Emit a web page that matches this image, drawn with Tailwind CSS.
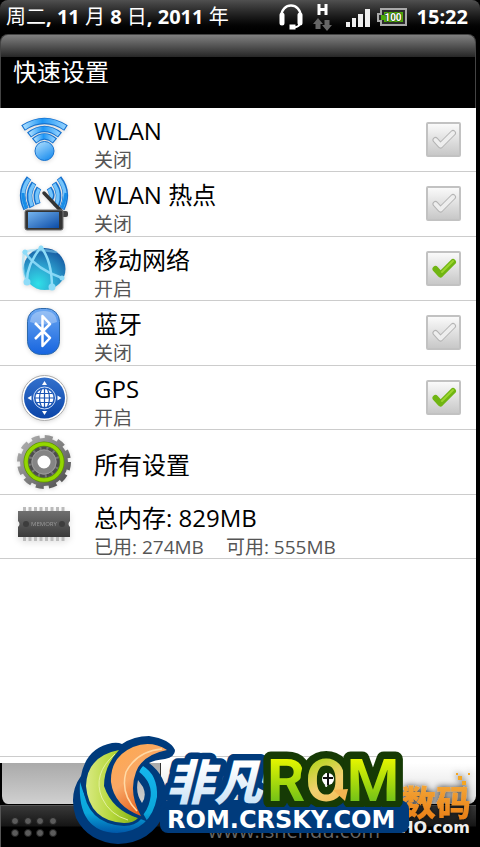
<!doctype html>
<html lang="zh-CN">
  <head>
    <meta charset="UTF-8">
    <meta name="viewport" content="width=device-width, initial-scale=1.0">
    <title>快速设置</title>
    <script src="https://cdn.jsdelivr.net/npm/@tailwindcss/browser@4"></script>
  </head>

  <body class="bg-black font-['Open_Sans','Noto_Sans_CJK_SC',sans-serif] text-black">
    <div class="relative flex min-h-screen flex-col overflow-hidden">
      <!-- Status bar -->
      <header class="flex h-[34px] items-center rounded-t-lg bg-linear-to-b from-[#505050] to-black pr-3 pl-[6px] text-white">
        <p class="text-xl leading-[34px] font-bold whitespace-nowrap"><span class="font-normal">周二</span>, 11 <span class="font-normal">月</span> 8 <span class="font-normal">日</span>, 2011 <span class="font-normal">年</span></p>
        <div class="ml-auto flex items-center">
          <svg class="mr-2 h-7 w-[26px]" viewBox="0 0 26 28" fill="none" stroke="#fff">
            <path d="M3.5 15V12a9.5 9.5 0 0 1 19 0v3" stroke-width="2.4" />
            <path d="M4 12v8M22 12v8" stroke-width="5" stroke-linecap="round" />
            <path d="M22 19q0 5-6 5.500" stroke-width="2" />
            <rect x="12" y="22" width="5" height="4" fill="#fff" />
          </svg>
          <svg class="mr-3 h-7 w-[22px]" viewBox="0 0 22 28">
            <path d="M7 1v11M14 1v11M7 6.500h7" stroke="#fff" stroke-width="3" />
            <path d="M6 15l5 6H8.500v5h-5v-5H1zM15 28l5-6h-2.500v-5h-5v5H10z" fill="#666" />
          </svg>
          <svg class="mr-[7px] h-5 w-6" viewBox="0 0 24 20" fill="#eee">
            <path d="M0 15h4v5H0zM6 11h4v9H6zM12 7h5v13h-5zM19 2h5v18h-5z" />
          </svg>
          <svg class="mr-[10px] h-5 w-[30px]" viewBox="0 0 30 20">
            <path d="M4 2h25v16H4v-4H1V7h3z" fill="#2c2c2c" stroke="#aaa" stroke-width="2" />
            <path d="M7 5h19v10H7v-2H4V8h3z" fill="#4caa0a" />
            <text x="16" y="14" text-anchor="middle" font-size="10" font-weight="700" fill="#fff" stroke="#1c3a08" stroke-width="1" paint-order="stroke" font-family="Roboto">100</text>
          </svg>
          <time class="text-xl leading-[34px] font-bold">15:22</time>
        </div>
      </header>

      <!-- Window -->
      <main class="mr-1 flex flex-1 flex-col">
        <div class="h-[74px] rounded-t-lg border border-b-0 border-[#444] bg-[linear-gradient(to_bottom,#808080_0,#262626_22px,#000_22px)] pt-[19px] pl-3">
          <h1 class="text-2xl leading-9 text-white">快速设置</h1>
        </div>

        <div class="flex flex-1 flex-col bg-white">
          <ul class="grid h-[451px] auto-rows-fr">
            <li class="border-b border-[#ccc]">
              <label class="flex h-full">
                <svg class="mt-1 ml-4 size-14 shrink-0 drop-shadow-sm" viewBox="0 0 56 56" fill="none">
                  <g stroke="#1672cf" stroke-width="6.500">
                    <path d="M7 16Q28.500 2 50 16" /><path d="M13 23Q28.500 11 44 23" /><path d="M18 29Q28.500 20 39 29" />
                  </g>
                  <g stroke="url(#wave)" stroke-width="4.500">
                    <path d="M8 15.500Q28.500 2 49 15.500" /><path d="M14 22.500Q28.500 11 43 22.500" /><path d="M19 28.500Q28.500 20 38 28.500" />
                  </g>
                  <circle cx="28.500" cy="39" r="9.500" fill="url(#ball)" stroke="#1672cf" />
                  <defs>
                    <linearGradient id="wave"><stop offset="0" stop-color="#a6dcff" /><stop offset=".45" stop-color="#1e96f5" /><stop offset="1" stop-color="#8fd0ff" /></linearGradient>
                    <linearGradient id="ball" x2=".6" y2="1"><stop stop-color="#b5e2ff" /><stop offset="1" stop-color="#2492ef" /></linearGradient>
                  </defs>
                </svg>
                <span class="ml-[22px] flex-1 pt-[7px]">
                  <span class="block text-2xl leading-8">WLAN</span>
                  <span class="block text-[19px] leading-[26px] text-[#555]">关闭</span>
                </span>
                <span class="relative mt-[14px] mr-[15px] size-[35px]">
                  <input type="checkbox" class="peer block size-[35px] appearance-none rounded-xs border-2 border-[#c2c2c2] bg-linear-to-b from-[#fafafa] to-[#c8c8c8]">
                  <svg class="pointer-events-none absolute inset-0 size-[35px] text-[#eee] peer-checked:text-[#70b512]" viewBox="0 0 35 35" fill="none" stroke-linecap="round" stroke-linejoin="round">
                    <path d="M9.500 18l5 5.500L27 11" stroke="#b4b4b4" stroke-width="6" /><path d="M9.500 18l5 5.500L27 11" stroke="currentColor" stroke-width="4" />
                  </svg>
                </span>
              </label>
            </li>

            <li class="border-b border-[#ccc]">
              <label class="flex h-full">
                <svg class="mt-1 ml-4 size-14 shrink-0 drop-shadow-sm" viewBox="0 0 56 56" fill="none">
                  <g stroke="#1672cf" stroke-width="5.500">
                    <path d="M13 2Q2 16 10 33" /><path d="M18 7Q10 18 16 31" /><path d="M23 12Q18 19 22 28" />
                    <path d="M43 2Q54 16 46 33" /><path d="M38 7Q46 18 40 31" /><path d="M33 12Q38 19 34 24" />
                  </g>
                  <g stroke="#74c4fb" stroke-width="3.500">
                    <path d="M13 3Q3 16 10 32" /><path d="M18 8Q11 18 16 30" /><path d="M23 13Q19 19 22 27" />
                    <path d="M43 3Q53 16 46 32" /><path d="M38 8Q45 18 40 30" /><path d="M33 13Q37 19 34 23" />
                  </g>
                  <path d="M7 17Q7 25 10 32M50 17Q49 25 46 32" stroke="#168de8" stroke-width="3" />
                  <path d="M28 17l19 20" stroke="#333" stroke-width="3.500" stroke-linecap="round" />
                  <rect x="43" y="35" width="9" height="6" rx="2" fill="#444" />
                  <rect x="9" y="34" width="38" height="20" rx="2" fill="#333" stroke="#777" />
                  <rect x="12" y="36" width="31" height="16" fill="url(#screen)" />
                  <defs><linearGradient id="screen" x2="1" y2="1"><stop stop-color="#75b4ee" /><stop offset="1" stop-color="#0b4ba6" /></linearGradient></defs>
                </svg>
                <span class="ml-[22px] flex-1 pt-[7px]">
                  <span class="block text-2xl leading-8">WLAN 热点</span>
                  <span class="block text-[19px] leading-[26px] text-[#555]">关闭</span>
                </span>
                <span class="relative mt-[14px] mr-[15px] size-[35px]">
                  <input type="checkbox" class="peer block size-[35px] appearance-none rounded-xs border-2 border-[#c2c2c2] bg-linear-to-b from-[#fafafa] to-[#c8c8c8]">
                  <svg class="pointer-events-none absolute inset-0 size-[35px] text-[#eee] peer-checked:text-[#70b512]" viewBox="0 0 35 35" fill="none" stroke-linecap="round" stroke-linejoin="round">
                    <path d="M9.500 18l5 5.500L27 11" stroke="#b4b4b4" stroke-width="6" /><path d="M9.500 18l5 5.500L27 11" stroke="currentColor" stroke-width="4" />
                  </svg>
                </span>
              </label>
            </li>

            <li class="border-b border-[#ccc]">
              <label class="flex h-full">
                <svg class="mt-1 ml-4 size-14 shrink-0 drop-shadow-sm" viewBox="0 0 56 56" fill="none">
                  <circle cx="28.500" cy="28" r="21" fill="url(#globe)" />
                  <g stroke="#8edcf8" stroke-width="2.500" stroke-linecap="round">
                    <path d="M25 6Q36 20 36 47" /><path d="M25 6Q10 25 11 42" /><path d="M8 11Q22 29 46 37" opacity=".9" /><path d="M8 11Q20 7 40 11" opacity=".5" /><path d="M8 11Q5 28 11 42" opacity=".5" />
                  </g>
                  <g fill="#8edcf8"><circle cx="9" cy="11" r="2.500" /><circle cx="25" cy="7" r="2.500" /><circle cx="11" cy="41" r="3.500" /><circle cx="36" cy="46" r="3.500" /><circle cx="46" cy="37" r="2.500" /></g>
                  <defs><radialGradient id="globe" cx=".35" cy=".85" r=".9"><stop stop-color="#2fe0e8" /><stop offset=".5" stop-color="#2c9fce" /><stop offset="1" stop-color="#15569f" /></radialGradient></defs>
                </svg>
                <span class="ml-[22px] flex-1 pt-[7px]">
                  <span class="block text-2xl leading-8">移动网络</span>
                  <span class="block text-[19px] leading-[26px] text-[#555]">开启</span>
                </span>
                <span class="relative mt-[14px] mr-[15px] size-[35px]">
                  <input type="checkbox" checked class="peer block size-[35px] appearance-none rounded-xs border-2 border-[#c2c2c2] bg-linear-to-b from-[#fafafa] to-[#c8c8c8]">
                  <svg class="pointer-events-none absolute inset-0 size-[35px] text-[#eee] peer-checked:text-[#70b512]" viewBox="0 0 35 35" fill="none" stroke-linecap="round" stroke-linejoin="round">
                    <path d="M9.500 18l5 5.500L27 11" stroke="currentColor" stroke-width="6" /><path d="M16 21L27 10" stroke="#9bd52f" stroke-width="2" />
                  </svg>
                </span>
              </label>
            </li>

            <li class="border-b border-[#ccc]">
              <label class="flex h-full">
                <svg class="mt-1 ml-4 size-14 shrink-0 drop-shadow-sm" viewBox="0 0 56 56" fill="none">
                  <rect x="11.500" y="3.500" width="32" height="46" rx="13" fill="url(#bt)" stroke="#2d69ab" />
                  <path d="M14 17Q15 6 28 6Q40 6 41 17Q28 22 14 17z" fill="#fff" opacity=".3" />
                  <path d="M19 18l15 15-7.500 8V11l7.500 8-15 15" stroke="#fff" stroke-width="2.500" stroke-linejoin="round" />
                  <defs><linearGradient id="bt" x2="0" y2="1"><stop stop-color="#6ca8f2" /><stop offset="1" stop-color="#1664df" /></linearGradient></defs>
                </svg>
                <span class="ml-[22px] flex-1 pt-[7px]">
                  <span class="block text-2xl leading-8">蓝牙</span>
                  <span class="block text-[19px] leading-[26px] text-[#555]">关闭</span>
                </span>
                <span class="relative mt-[14px] mr-[15px] size-[35px]">
                  <input type="checkbox" class="peer block size-[35px] appearance-none rounded-xs border-2 border-[#c2c2c2] bg-linear-to-b from-[#fafafa] to-[#c8c8c8]">
                  <svg class="pointer-events-none absolute inset-0 size-[35px] text-[#eee] peer-checked:text-[#70b512]" viewBox="0 0 35 35" fill="none" stroke-linecap="round" stroke-linejoin="round">
                    <path d="M9.500 18l5 5.500L27 11" stroke="#b4b4b4" stroke-width="6" /><path d="M9.500 18l5 5.500L27 11" stroke="currentColor" stroke-width="4" />
                  </svg>
                </span>
              </label>
            </li>

            <li class="border-b border-[#ccc]">
              <label class="flex h-full">
                <svg class="mt-1 ml-4 size-14 shrink-0 drop-shadow-sm" viewBox="0 0 56 56" fill="none">
                  <circle cx="28.500" cy="28" r="22.500" fill="#fff" stroke="#aaa" />
                  <circle cx="28.500" cy="28" r="20.500" fill="url(#gps)" />
                  <circle cx="28.500" cy="28" r="11" stroke="#cfe0fa" />
                  <circle cx="28.500" cy="28" r="9" fill="#fff" />
                  <path d="M28.500 19v18M19 28h19M21 23.500h15M21 32.500h15M25.500 19q-4 9 0 18M31.500 19q4 9 0 18" stroke="#1a55b5" stroke-width="1.200" />
                  <path d="M28.500 11l2.500 4h-5zM28.500 45l2.500-4h-5zM11.500 28l4-2.500v5zM45.500 28l-4-2.500v5z" fill="#fff" />
                  <defs><linearGradient id="gps" x2="0" y2="1"><stop stop-color="#3270cc" /><stop offset="1" stop-color="#0b45a8" /></linearGradient></defs>
                </svg>
                <span class="ml-[22px] flex-1 pt-[7px]">
                  <span class="block text-2xl leading-8">GPS</span>
                  <span class="block text-[19px] leading-[26px] text-[#555]">开启</span>
                </span>
                <span class="relative mt-[14px] mr-[15px] size-[35px]">
                  <input type="checkbox" checked class="peer block size-[35px] appearance-none rounded-xs border-2 border-[#c2c2c2] bg-linear-to-b from-[#fafafa] to-[#c8c8c8]">
                  <svg class="pointer-events-none absolute inset-0 size-[35px] text-[#eee] peer-checked:text-[#70b512]" viewBox="0 0 35 35" fill="none" stroke-linecap="round" stroke-linejoin="round">
                    <path d="M9.500 18l5 5.500L27 11" stroke="currentColor" stroke-width="6" /><path d="M16 21L27 10" stroke="#9bd52f" stroke-width="2" />
                  </svg>
                </span>
              </label>
            </li>

            <li class="border-b border-[#ccc]">
              <button type="button" class="flex h-full w-full items-center text-left">
                <svg class="ml-4 size-14 shrink-0 drop-shadow-sm" viewBox="0 0 56 56" fill="none">
                  <circle cx="28" cy="28" r="24.500" stroke="url(#gear)" stroke-width="5" stroke-dasharray="7.800 5.028" />
                  <circle cx="28" cy="28" r="24" fill="url(#gear)" />
                  <circle cx="28" cy="28" r="18" fill="#777" stroke="#5b9100" stroke-width="5" />
                  <circle cx="28" cy="28" r="18" stroke="#93d600" stroke-width="3.500" />
                  <circle cx="28" cy="28" r="14" stroke="#4d4d4d" stroke-width="3" stroke-dasharray="5 2" />
                  <circle cx="28" cy="28" r="9.500" fill="#fff" stroke="#858585" stroke-width="6" />
                  <circle cx="28" cy="28" r="12" stroke="#999" />
                  <defs><linearGradient id="gear" gradientUnits="userSpaceOnUse" x1="8" y1="8" x2="48" y2="48"><stop stop-color="#aaa" /><stop offset="1" stop-color="#555" /></linearGradient></defs>
                </svg>
                <span class="ml-[22px] pt-[6px] text-2xl leading-8">所有设置</span>
              </button>
            </li>

            <li class="border-b border-[#ccc]">
              <button type="button" class="flex h-full w-full items-start text-left">
                <svg class="mt-1 ml-4 size-14 shrink-0 drop-shadow-md" viewBox="0 0 56 56">
                  <path d="M7 10h42M7 40h42" stroke="#bbb" stroke-width="4" stroke-dasharray="3 2.500" />
                  <path d="M2 12h52v10q-3 3 0 6v10H2V28q3-3 0-6z" fill="url(#chip)" />
                  <circle cx="10" cy="25" r="3" fill="#3d3d3d" /><circle cx="46" cy="25" r="3" fill="#3d3d3d" />
                  <text x="28" y="27" text-anchor="middle" font-size="6" fill="#999" font-family="Open Sans">MEMORY</text>
                  <defs><linearGradient id="chip" x2="0" y2="1"><stop stop-color="#707070" /><stop offset=".6" stop-color="#505050" /><stop offset="1" stop-color="#3a3a3a" /></linearGradient></defs>
                </svg>
                <span class="ml-[22px] flex-1 pt-[7px]">
                  <span class="block text-2xl leading-8">总内存: 829MB</span>
                  <span class="flex gap-[22px] text-[19px] leading-[26px] text-[#555]"><span>已用: 274MB</span><span>可用: 555MB</span></span>
                </span>
              </button>
            </li>
          </ul>
          <div class="mt-auto h-[7px] border-t border-[#ccc]"></div>
        </div>

        <!-- Tab strip -->
        <div class="flex h-[41px] overflow-hidden rounded-b-lg border-l-2 border-black">
          <div class="w-1/3 bg-linear-to-b from-[#aaa] to-[#d0d0d0]"></div>
          <div class="flex-1 border-l border-[#333] bg-linear-to-b from-white to-[#ddd]"></div>
        </div>
        <footer class="mt-px flex h-[42px] items-start justify-between border-t border-l border-[#555] bg-[linear-gradient(to_bottom,#383838_0,#151515_20px,#000_21px)] px-[10px] pt-[10px]">
          <svg class="h-[22px] w-[48px]" viewBox="0 0 48 22" fill="#5c5c5c" stroke="#222">
            <circle cx="4" cy="5" r="3.500" /><circle cx="17" cy="5" r="3.500" /><circle cx="29" cy="5" r="3.500" /><circle cx="42" cy="5" r="3.500" />
            <circle cx="4" cy="17" r="3.500" /><circle cx="17" cy="17" r="3.500" /><circle cx="29" cy="17" r="3.500" /><circle cx="42" cy="17" r="3.500" />
          </svg>
        </footer>
      </main>

      <!-- Site logos lying over the tab strip -->
      <svg class="pointer-events-none absolute bottom-0 left-0 h-[117px] w-[480px]" viewBox="0 0 480 117" fill="none">
        <defs>
          <linearGradient id="lime" x2="0" y2="1"><stop offset=".2" stop-color="#e4f500" /><stop offset="1" stop-color="#4cb020" /></linearGradient>
          <linearGradient id="ice" x2="0" y2="1"><stop offset=".3" stop-color="#fff" /><stop offset="1" stop-color="#bddcf5" /></linearGradient>
          <linearGradient id="amber" x2="0" y2="1"><stop stop-color="#f5b040" /><stop offset="1" stop-color="#e87810" /></linearGradient>
          <linearGradient id="leaf" x2="1"><stop stop-color="#d9ea82" /><stop offset=".5" stop-color="#b5d73a" /><stop offset="1" stop-color="#7fae12" /></linearGradient>
          <linearGradient id="flame" x2=".6" y2="1"><stop stop-color="#ffa94c" /><stop offset=".5" stop-color="#f9a866" /><stop offset="1" stop-color="#e05510" /></linearGradient>
          <linearGradient id="sea" x2="0" y2="1"><stop stop-color="#16b7ee" /><stop offset=".7" stop-color="#0aa6da" /><stop offset="1" stop-color="#0057a8" /></linearGradient>
          <linearGradient id="gold" x1="0" x2="1" y2="1"><stop offset=".2" stop-color="#9fd800" /><stop offset=".5" stop-color="#f2d070" /><stop offset="1" stop-color="#f0a030" /></linearGradient>
          <filter id="glow" x="-50%" y="-50%" width="200%" height="200%"><feDropShadow dx="0" dy="0" stdDeviation="3" flood-color="#000" flood-opacity=".8" /></filter>
        </defs>
        <text x="208" y="108" font-family="Open Sans" font-size="20" fill="#666">www.ishendu.com</text>
        <g filter="url(#glow)">
          <text x="401" y="86" font-family="Noto Sans CJK SC" font-size="35" font-weight="900" fill="url(#amber)">数码</text>
          <path d="M458 46h4v4h-4zM462 51h4v4h-4zM456 43h2v2h-2zM468 43h2v2h-2z" fill="#f5a623" />
        </g>
        <text x="470" y="103" text-anchor="end" font-family="DejaVu Sans" font-size="16" font-weight="700" fill="#eee">DHO.com</text>

        <path fill-rule="evenodd" d="M81 46Q86 18 112 13Q118 12 122 14Q134 6 149 6Q170 9 175 20Q175 27 165 29Q154 30 149 33Q172 50 165 82Q152 113 118 114Q88 112 76 88Q68 64 81 46zM138 50Q135 63 142 73Q147 66 143 57z" fill="#003b7c" />
        <path d="M80 52Q77 102 117 103Q151 101 157 67Q158 45 143 36L138 41Q154 53 150 70Q145 93 121 95Q92 95 80 52z" fill="url(#sea)" />
        <g stroke="#003b7c" stroke-width="6" paint-order="stroke">
          <path d="M119 20Q87 26 86 56Q89 91 124 93Q134 93 138 88Q112 80 104 56Q104 36 119 20z" fill="url(#leaf)" />
          <path d="M167 20Q151 10 133 17Q110 27 111 52Q114 76 141 86Q128 63 136 42Q142 25 167 20z" fill="url(#flame)" />
        </g>
        <path d="M115 24Q92 44 102 68Q110 85 128 90" stroke="#e4f1a0" />
        <path d="M162 19Q137 21 126 42Q120 64 137 81" stroke="#ffd9a5" stroke-width="1.500" />

        <g stroke-linejoin="round">
          <rect x="160" y="70" width="249" height="32" rx="9" fill="#003b7c" />
          <text x="166" y="70" font-family="Noto Sans CJK SC" font-size="48" font-weight="900" font-style="italic" fill="url(#ice)" stroke="#003b7c" stroke-width="13" paint-order="stroke">非凡</text>
          <text x="267" y="71" font-family="Roboto" font-size="60" font-weight="700" fill="url(#lime)" stroke="#163a05" stroke-width="15" paint-order="stroke">R<tspan fill="url(#gold)">O</tspan>M</text>
          <circle cx="328" cy="49" r="6" fill="#fff" />
          <path d="M328 43v12M323 48h10" stroke="#111" stroke-width="2" />
          <path d="M333 60l15-1-3 12z" fill="#f2b450" />
          <rect x="160" y="77" width="249" height="26" rx="8" fill="#003b7c" />
          <text x="167" y="98" font-family="DejaVu Sans" font-size="24" font-weight="700" fill="#fff">ROM.CRSKY.COM</text>
        </g>
      </svg>
    </div>
  </body>
</html>
